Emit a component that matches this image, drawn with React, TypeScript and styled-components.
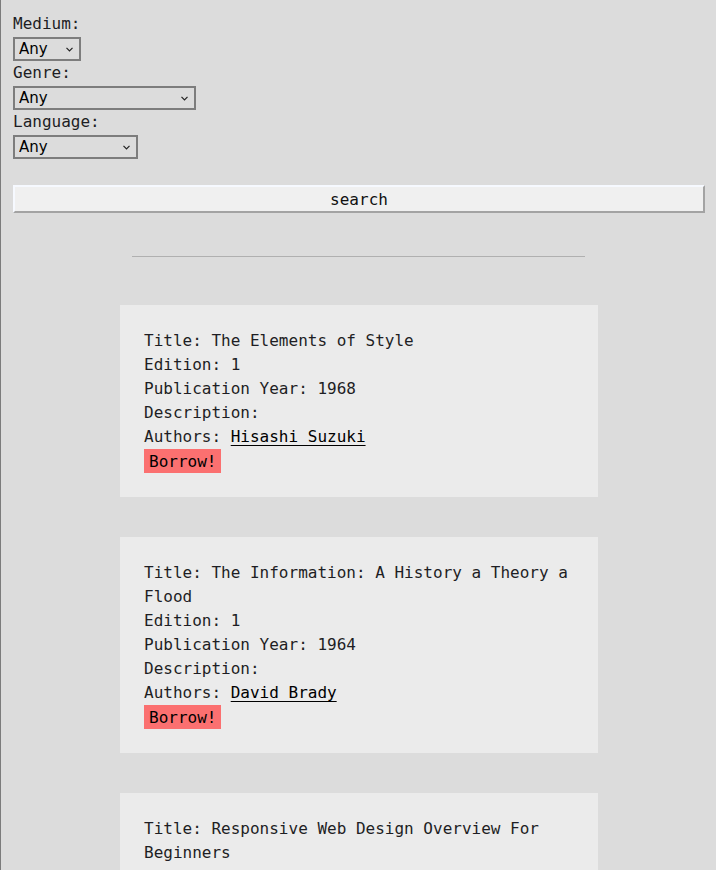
import React from "react";
import styled, { createGlobalStyle } from "styled-components";

const Global = createGlobalStyle`
  html, body { margin: 0; padding: 0; background: #dcdcdc; }
  body { font-family: "DejaVu Sans Mono", "Liberation Mono", monospace; color: #1e1e24; }
`;

const Page = styled.div`
  min-height: 870px;
  box-sizing: border-box;
  border-left: 1px solid #7c7c7c;
  padding: 14px 11px 40px 11px;
  font-size: 16px;
`;

const Filters = styled.form`
  display: flex;
  flex-direction: column;
  align-items: flex-start;
`;

const Label = styled.label`
  display: block;
  line-height: 20px;
  padding-left: 1px;
`;

const SelectWrap = styled.div<{ $w: number }>`
  position: relative;
  width: ${(p) => p.$w}px;
  margin: 3px 0 2px 1px;
`;

const Select = styled.select`
  appearance: none;
  -webkit-appearance: none;
  width: 100%;
  height: 24px;
  box-sizing: border-box;
  border: 2px solid #7d7d7d;
  border-radius: 0;
  background: transparent;
  font-family: "DejaVu Sans", sans-serif;
  font-size: 15px;
  color: #000;
  padding: 0 0 0 4px;
  outline: none;
`;

const Chevron = styled.svg`
  position: absolute;
  right: 8px;
  top: 10px;
  pointer-events: none;
`;

const SearchButton = styled.button`
  display: block;
  width: calc(100% - 1px);
  height: 28px;
  margin: 24px 0 0 1px;
  box-sizing: border-box;
  background: #f0f0f0;
  border-style: solid;
  border-width: 2px;
  border-color: #f6f9ff #a3a3a3 #a3a3a3 #f6f9ff;
  font-family: "DejaVu Sans Mono", monospace;
  font-size: 16px;
  color: #111;
  padding: 0;
`;

const Divider = styled.hr`
  width: 453px;
  margin: 43px auto 48px;
  border: none;
  border-top: 1px solid #b0b0b0;
  height: 0;
`;

const List = styled.div`
  display: flex;
  flex-direction: column;
  align-items: center;
  gap: 40px;
  padding-left: 1px;
`;

const Card = styled.article`
  width: 478px;
  box-sizing: border-box;
  background: #ebebeb;
  padding: 24px 24px 24px;
`;

const Line = styled.div`
  line-height: 24px;
`;

const AuthorLink = styled.a`
  color: #000;
  text-decoration: underline;
  text-underline-offset: 3px;
  cursor: pointer;
`;

const Borrow = styled.button`
  display: block;
  height: 24px;
  padding: 0 5px;
  border: none;
  background: #fb7070;
  font-family: "DejaVu Sans Mono", monospace;
  font-size: 16px;
  color: #000;
`;

type Book = {
  title: string;
  edition: number;
  year: number;
  author: string;
};

const books: Book[] = [
  { title: "The Elements of Style", edition: 1, year: 1968, author: "Hisashi Suzuki" },
  { title: "The Information: A History a Theory a Flood", edition: 1, year: 1964, author: "David Brady" },
  { title: "Responsive Web Design Overview For Beginners", edition: 1, year: 1990, author: "Anna Kowalski" },
];

const Dropdown = ({ id, w }: { id: string; w: number }) => (
  <SelectWrap $w={w}>
    <Select id={id} defaultValue="any">
      <option value="any">Any</option>
    </Select>
    <Chevron width="7" height="5" viewBox="0 0 7 5">
      <path d="M0.5 0.8 L3.5 3.8 L6.5 0.8" fill="none" stroke="#222" strokeWidth="1.2" />
    </Chevron>
  </SelectWrap>
);

export default function App() {
  return (
    <>
      <Global />
      <Page>
        <Filters onSubmit={(e) => e.preventDefault()}>
          <Label htmlFor="medium">Medium:</Label>
          <Dropdown id="medium" w={68} />
          <Label htmlFor="genre">Genre:</Label>
          <Dropdown id="genre" w={183} />
          <Label htmlFor="language">Language:</Label>
          <Dropdown id="language" w={125} />
          <SearchButton type="submit">search</SearchButton>
        </Filters>
        <Divider />
        <List>
          {books.map((b) => (
            <Card key={b.title}>
              <Line>Title: {b.title}</Line>
              <Line>Edition: {b.edition}</Line>
              <Line>Publication Year: {b.year}</Line>
              <Line>Description:</Line>
              <Line>
                Authors: <AuthorLink>{b.author}</AuthorLink>
              </Line>
              <Borrow>Borrow!</Borrow>
            </Card>
          ))}
        </List>
      </Page>
    </>
  );
}
